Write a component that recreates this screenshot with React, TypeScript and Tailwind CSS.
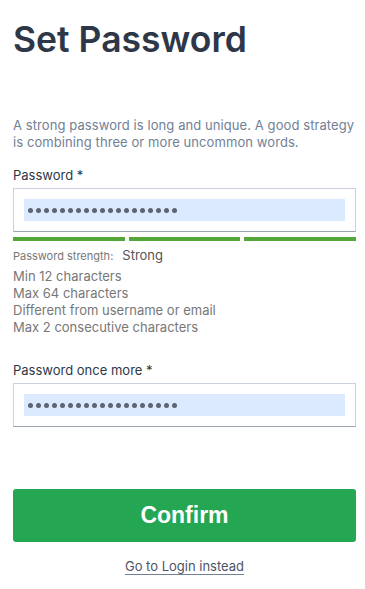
const inter = { fontFamily: 'Inter, "Noto Sans", sans-serif' };

function PasswordField({ label }: { label: string }) {
  return (
    <div>
      <label className="block text-[13px] leading-[17px] text-[#2d3748]">{label}</label>
      <div className="mt-[4px] h-[44px] border border-[#cbd2dc] border-b-[#9aa3b0] bg-white p-[10px]">
        <div className="flex h-[22px] items-center bg-[#dbeafe] pl-[2px]">
          {Array.from({ length: 19 }).map((_, i) => (
            <span key={i} className="flex w-[8px] justify-center">
              <span className="block h-[5px] w-[5px] rounded-full bg-[#5d6573]" />
            </span>
          ))}
        </div>
      </div>
    </div>
  );
}

export default function App() {
  const rules = [
    'Min 12 characters',
    'Max 64 characters',
    'Different from username or email',
    'Max 2 consecutive characters',
  ];

  return (
    <div className="min-h-screen bg-white" style={inter}>
      <div className="ml-[13px] w-[343px] pt-[18px]">
        <h1 className="text-[35.5px] leading-[44px] font-semibold text-[#2d3748]">Set Password</h1>

        <p className="mt-[55px] text-[13px] leading-[17px] tracking-[0.08px] text-[#718096]">
          A strong password is long and unique. A good strategy is combining three or more uncommon words.
        </p>

        <div className="mt-[16px]">
          <PasswordField label="Password *" />
        </div>

        <div className="mt-[5px] grid grid-cols-3 gap-[4px]">
          <div className="h-[4px] bg-[#55a63a]" />
          <div className="h-[4px] bg-[#55a63a]" />
          <div className="h-[4px] bg-[#55a63a]" />
        </div>

        <div className="mt-[6px] flex items-baseline text-[13px] leading-[17px]">
          <span className="text-[11px] text-[#777]">Password strength:</span>
          <span className="ml-[9px] text-[#555]">Strong</span>
        </div>

        <ul className="mt-[3px] text-[13px] leading-[17px] text-[#777]">
          {rules.map((r) => (
            <li key={r}>{r}</li>
          ))}
        </ul>

        <div className="mt-[26px]">
          <PasswordField label="Password once more *" />
        </div>

        <button
          type="button"
          className="mt-[62px] flex h-[53px] w-full items-center justify-center rounded-[3px] bg-[#24a653] text-[23px] font-bold text-white"
          style={{ fontFamily: '"Liberation Sans", Arial, sans-serif' }}
        >
          Confirm
        </button>

        <div className="mt-[16px] text-center text-[13px] leading-[17px]">
          <a href="#" className="text-[#4a5568] underline decoration-[#718096] underline-offset-[3px]">
            Go to Login instead
          </a>
        </div>
      </div>
    </div>
  );
}
